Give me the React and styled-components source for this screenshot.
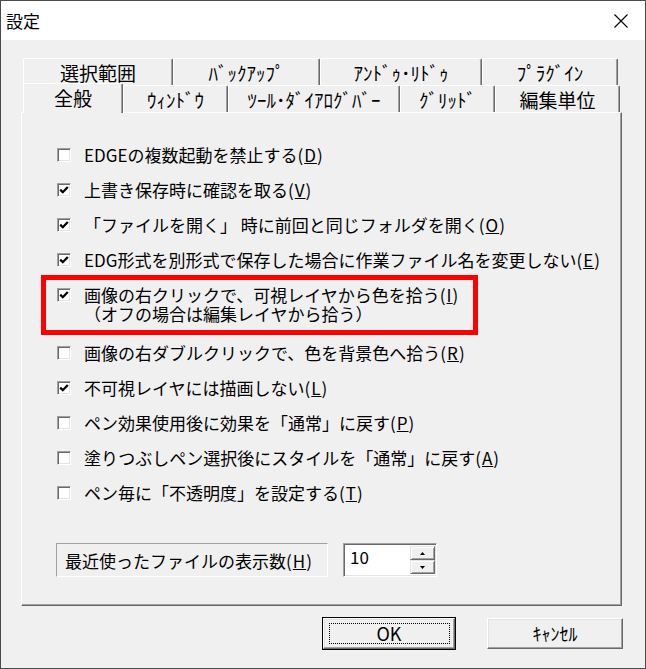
import React from "react";
import styled, { createGlobalStyle } from "styled-components";

const FONT = `"Noto Sans CJK JP", "Noto Sans CJK SC", sans-serif`;

const GlobalStyle = createGlobalStyle`
  html, body { margin: 0; padding: 0; background: #f0f0f0; }
  body { font-family: ${FONT}; }
`;

const Window = styled.div`
  width: 646px;
  height: 669px;
  box-sizing: border-box;
  border: 1px solid #4a4a4a;
  display: flex;
  flex-direction: column;
  background: #f0f0f0;
  font-family: ${FONT};
  color: #000;
  overflow: hidden;
`;

const TitleBar = styled.div`
  height: 39px;
  flex: none;
  background: #fff;
  display: flex;
  align-items: center;
  justify-content: space-between;
  padding: 0 17px 0 5px;
`;

const Title = styled.span`
  font-size: 17px;
  line-height: 1;
`;

const Body = styled.div`
  flex: 1;
  display: flex;
  flex-direction: column;
  padding: 18px 22px 0 20px;
`;

const TabStrip = styled.div`
  display: flex;
  flex-direction: column;
  margin-left: 2px;
`;

const TabRow = styled.div`
  display: flex;
  align-items: flex-end;
  height: 27px;
`;

const Tab = styled.div`
  box-sizing: border-box;
  width: ${(p) => p.$w}px;
  height: ${(p) => (p.$selected ? 30 : 27)}px;
  margin-bottom: ${(p) => (p.$selected ? -1 : 0)}px;
  position: relative;
  z-index: ${(p) => (p.$selected ? 2 : 0)};
  background: #f0f0f0;
  border-top: 1px solid #fff;
  border-left: 1px solid #fff;
  border-right: 1px solid #696969;
  box-shadow: inset -1px 0 0 #a0a0a0;
  border-top-left-radius: 2px;
  border-top-right-radius: 2px;
  display: flex;
  align-items: center;
  justify-content: center;
  padding-bottom: ${(p) => (p.$selected ? 3 : 0)}px;
  font-size: 19px;
  line-height: 1;
  white-space: nowrap;
`;

const Panel = styled.div`
  box-sizing: border-box;
  width: 601px;
  height: 494px;
  border-top: 1px solid #fff;
  border-left: 1px solid #fff;
  border-right: 1px solid #696969;
  border-bottom: 1px solid #696969;
  box-shadow: inset -1px -1px 0 #a0a0a0;
  padding: 24px 0 0 35px;
  display: flex;
  flex-direction: column;
`;

const Row = styled.div`
  display: flex;
  align-items: center;
  gap: 13px;
  height: 35px;
  font-size: 17px;
  line-height: 17px;
  white-space: nowrap;
`;

const Highlight = styled.div`
  box-sizing: border-box;
  width: 437px;
  height: 60px;
  margin: -2px 0 0 -16px;
  border: 5px solid #ff0000;
  display: flex;
  align-items: flex-start;
  gap: 13px;
  padding: 5px 0 0 11px;
  font-size: 17px;
  line-height: 19px;
  white-space: nowrap;
`;

const Lines = styled.div`
  display: flex;
  flex-direction: column;
`;

const Box = styled.span`
  box-sizing: border-box;
  width: 14px;
  height: 14px;
  flex: none;
  margin-top: ${(p) => p.$top || 0}px;
  background: #fff;
  border-top: 1px solid #a0a0a0;
  border-left: 1px solid #a0a0a0;
  border-right: 1px solid #fff;
  border-bottom: 1px solid #fff;
  box-shadow: inset 1px 1px 0 #696969, inset -1px -1px 0 #e3e3e3;
  display: flex;
  align-items: center;
  justify-content: center;
`;

const BottomGroup = styled.div`
  display: flex;
  align-items: flex-start;
  gap: 15px;
  margin: 33px 0 0 -1px;
`;

const StaticBox = styled.div`
  box-sizing: border-box;
  width: 272px;
  height: 34px;
  border-top: 1px solid #a0a0a0;
  border-left: 1px solid #a0a0a0;
  border-right: 1px solid #fff;
  border-bottom: 1px solid #fff;
  display: flex;
  align-items: center;
  padding-left: 8px;
  font-size: 17px;
  line-height: 17px;
  white-space: nowrap;
`;

const SpinEdit = styled.div`
  box-sizing: border-box;
  width: 94px;
  height: 34px;
  border-top: 1px solid #a0a0a0;
  border-left: 1px solid #a0a0a0;
  border-right: 1px solid #fff;
  border-bottom: 1px solid #fff;
  box-shadow: inset 1px 1px 0 #696969, inset -1px -1px 0 #e3e3e3;
  background: #fff;
  display: flex;
  padding: 2px 1px 2px 2px;
`;

const EditText = styled.span`
  flex: 1;
  padding: 2px 0 0 4px;
  font-size: 17px;
  line-height: 17px;
`;

const Spinner = styled.div`
  width: 25px;
  display: flex;
  flex-direction: column;
`;

const SpinButton = styled.div`
  box-sizing: border-box;
  height: 15px;
  background: #f0f0f0;
  border-top: 1px solid #e3e3e3;
  border-left: 1px solid #e3e3e3;
  border-right: 1px solid #696969;
  border-bottom: 1px solid #696969;
  box-shadow: inset 1px 1px 0 #fff, inset -1px -1px 0 #a0a0a0;
  display: flex;
  align-items: center;
  justify-content: center;
`;

const ButtonRow = styled.div`
  display: flex;
  justify-content: flex-end;
  gap: 32px;
  margin-top: 12px;
`;

const Button = styled.div`
  box-sizing: border-box;
  width: ${(p) => p.$w}px;
  height: 31px;
  position: relative;
  background: #f0f0f0;
  border: 1px solid;
  border-color: #fff #696969 #696969 #fff;
  box-shadow: inset -1px -1px 0 #a0a0a0, inset 1px 1px 0 #e3e3e3;
  outline: ${(p) => (p.$default ? "1px solid #000" : "none")};
  display: flex;
  align-items: center;
  justify-content: center;
  font-size: 18px;
  line-height: 1;
  padding-bottom: 1px;
`;

const FocusRect = styled.span`
  position: absolute;
  inset: 4px 4px 4px 5px;
  border: 1px dotted #000;
`;

const KeyText = styled.span`
  letter-spacing: 1px;
`;

const Check = () => (
  <svg width="10" height="10" viewBox="0 0 10 10">
    <polyline points="1.2,4.6 3.8,7.2 8.8,2" fill="none" stroke="#000" strokeWidth="2.3" />
  </svg>
);

const CheckBox = ({ checked, top }) => <Box $top={top}>{checked && <Check />}</Box>;

const Arrow = ({ up }) => (
  <svg width="5" height="3" viewBox="0 0 5 3">
    <polygon points={up ? "0,3 5,3 2.5,0" : "0,0 5,0 2.5,3"} fill="#000" />
  </svg>
);

const K = ({ k }) => (
  <KeyText>
    (<u>{k}</u>)
  </KeyText>
);

const backTabs = [
  ["選択範囲", 150],
  ["ﾊﾞｯｸｱｯﾌﾟ", 147],
  ["ｱﾝﾄﾞｩ･ﾘﾄﾞｩ", 162],
  ["ﾌﾟﾗｸﾞｲﾝ", 136],
];

const frontTabs = [
  ["全般", 100, true],
  ["ｳｨﾝﾄﾞｳ", 105],
  ["ﾂｰﾙ･ﾀﾞｲｱﾛｸﾞﾊﾞｰ", 172],
  ["ｸﾞﾘｯﾄﾞ", 95],
  ["編集単位", 125],
];

const rowsTop = [
  ["EDGEの複数起動を禁止する", "D", false],
  ["上書き保存時に確認を取る", "V", true],
  ["「ファイルを開く」 時に前回と同じフォルダを開く", "O", true],
  ["EDG形式を別形式で保存した場合に作業ファイル名を変更しない", "E", true],
];

const rowsBottom = [
  ["画像の右ダブルクリックで、色を背景色へ拾う", "R", false],
  ["不可視レイヤには描画しない", "L", true],
  ["ペン効果使用後に効果を「通常」に戻す", "P", false],
  ["塗りつぶしペン選択後にスタイルを「通常」に戻す", "A", false],
  ["ペン毎に「不透明度」を設定する", "T", false],
];

const OptionRow = ({ text, k, checked }) => (
  <Row>
    <CheckBox checked={checked} />
    <span>
      {text}
      <K k={k} />
    </span>
  </Row>
);

export default function App() {
  return (
    <>
      <GlobalStyle />
      <Window>
        <TitleBar>
          <Title>設定</Title>
          <svg width="14" height="14" viewBox="0 0 14 14">
            <path d="M0.5 0.5 L13.5 13.5 M13.5 0.5 L0.5 13.5" stroke="#000" strokeWidth="1.1" />
          </svg>
        </TitleBar>
        <Body>
          <TabStrip>
            <TabRow>
              {backTabs.map(([t, w]) => (
                <Tab key={t} $w={w}>
                  {t}
                </Tab>
              ))}
            </TabRow>
            <TabRow>
              {frontTabs.map(([t, w, s]) => (
                <Tab key={t} $w={w} $selected={s}>
                  {t}
                </Tab>
              ))}
            </TabRow>
          </TabStrip>
          <Panel>
            {rowsTop.map(([t, k, c]) => (
              <OptionRow key={k} text={t} k={k} checked={c} />
            ))}
            <Highlight>
              <CheckBox checked top={3} />
              <Lines>
                <span>
                  画像の右クリックで、可視レイヤから色を拾う<K k="I" />
                </span>
                <span>（オフの場合は編集レイヤから拾う）</span>
              </Lines>
            </Highlight>
            {rowsBottom.map(([t, k, c]) => (
              <OptionRow key={k} text={t} k={k} checked={c} />
            ))}
            <BottomGroup>
              <StaticBox>
                最近使ったファイルの表示数<K k="H" />
              </StaticBox>
              <SpinEdit>
                <EditText>10</EditText>
                <Spinner>
                  <SpinButton>
                    <Arrow up />
                  </SpinButton>
                  <SpinButton>
                    <Arrow />
                  </SpinButton>
                </Spinner>
              </SpinEdit>
            </BottomGroup>
          </Panel>
          <ButtonRow>
            <Button $w={132} $default>
              OK
              <FocusRect />
            </Button>
            <Button $w={136}>ｷｬﾝｾﾙ</Button>
          </ButtonRow>
        </Body>
      </Window>
    </>
  );
}
